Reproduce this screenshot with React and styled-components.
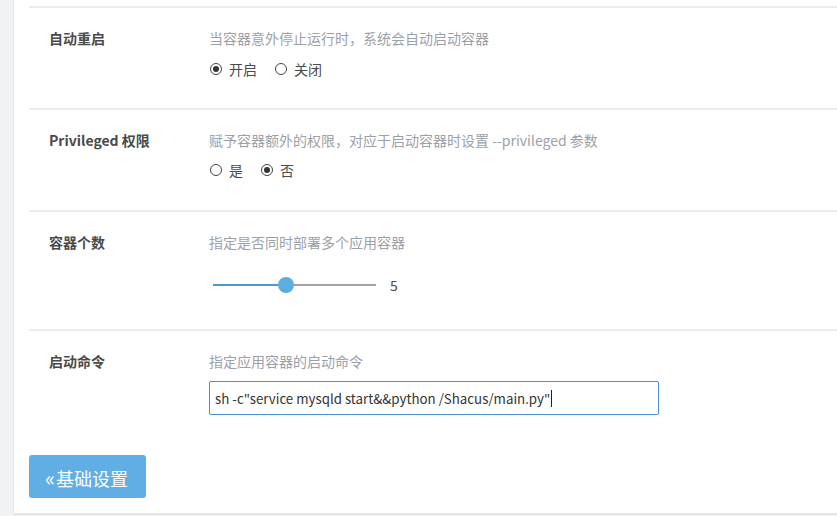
import styled, { createGlobalStyle } from 'styled-components';

const GlobalStyle = createGlobalStyle`
	html, body {
		margin: 0;
		padding: 0;
		background: #f1f2f6;
		font-family: "Noto Sans CJK SC", "Noto Sans", sans-serif;
	}
`;

const Page = styled.div`
	padding-left: 13px;
	height: 516px;
	overflow: hidden;
`;

const Panel = styled.div`
	background: #fff;
	border-left: 1px solid #e6e8ec;
	border-bottom: 2px solid #e4e6ea;
	padding: 6px 0 0 15px;
	height: 515px;
	box-sizing: border-box;
	width: 840px;
`;

const Row = styled.div`
	display: grid;
	grid-template-columns: 180px 1fr;
	border-top: 2px solid #ececee;
	padding-top: 20px;
	height: ${(p) => p.$h || 'auto'};
	box-sizing: border-box;
`;

const Label = styled.div`
	padding-left: 20px;
	font-size: 14px;
	font-weight: 700;
	color: #4a4a4a;
	line-height: 20px;
`;

const Field = styled.div`
	display: flex;
	flex-direction: column;
	gap: ${(p) => p.$gap || '10px'};
`;

const Desc = styled.div`
	font-size: 14px;
	color: #9ba1a9;
	line-height: 20px;
`;

const RadioGroup = styled.div`
	display: flex;
	align-items: center;
	height: 20px;
	gap: 17px;
`;

const RadioItem = styled.label`
	display: flex;
	align-items: center;
	gap: 7px;
	font-size: 14px;
	color: #4a4a4a;
`;

const Circle = styled.span`
	width: 12px;
	height: 12px;
	border: 1.3px solid #444;
	border-radius: 50%;
	box-sizing: border-box;
	display: flex;
	align-items: center;
	justify-content: center;
	margin-left: 1px;

	&::after {
		content: '';
		width: 6px;
		height: 6px;
		border-radius: 50%;
		background: ${(p) => (p.$checked ? '#333' : 'transparent')};
	}
`;

const SliderRow = styled.div`
	display: flex;
	align-items: center;
	height: 20px;
	margin-top: 13px;
	padding-left: 4px;
`;

const Track = styled.div`
	position: relative;
	width: 163px;
	height: 2px;
	background: #a2a2a2;
`;

const Fill = styled.div`
	height: 100%;
	background: #4f97cf;
`;

const Thumb = styled.span`
	position: absolute;
	top: 50%;
	width: 16px;
	height: 16px;
	border-radius: 50%;
	background: #5dade2;
	transform: translate(-50%, -50%);
`;

const SliderValue = styled.span`
	margin-left: 14px;
	font-size: 14px;
	color: #4a4a4a;
`;

const CommandInput = styled.div`
	width: 450px;
	height: 34px;
	border: 1px solid #4a90d0;
	border-radius: 2px;
	box-sizing: border-box;
	display: flex;
	align-items: center;
	padding-left: 5px;
	font-size: 13.3px;
	color: #333;
`;

const Caret = styled.span`
	display: inline-block;
	width: 1px;
	height: 17px;
	background: #222;
	margin-left: 1px;
`;

const Footer = styled.div`
	padding-top: 40px;
`;

const BackButton = styled.button`
	width: 117px;
	height: 43px;
	border: none;
	border-radius: 3px;
	background: #60aee3;
	color: #fff;
	font-family: inherit;
	font-size: 18px;
	padding: 0 2px 0 0;
	cursor: pointer;

	span {
		font-size: 21px;
		margin-right: 1px;
	}
`;

const sliderValue = 5;
const sliderMax = 11;

export default function App() {
	const pct = ((sliderValue - 1) / (sliderMax - 1)) * 100 + 4.7;

	return (
		<Page>
			<GlobalStyle />
			<Panel>
				<Row $h="102px">
					<Label>自动重启</Label>
					<Field $gap="11px">
						<Desc>当容器意外停止运行时，系统会自动启动容器</Desc>
						<RadioGroup>
							<RadioItem>
								<Circle $checked />
								开启
							</RadioItem>
							<RadioItem>
								<Circle />
								关闭
							</RadioItem>
						</RadioGroup>
					</Field>
				</Row>
				<Row $h="102px">
					<Label>Privileged 权限</Label>
					<Field>
						<Desc>赋予容器额外的权限，对应于启动容器时设置 --privileged 参数</Desc>
						<RadioGroup>
							<RadioItem>
								<Circle />
								是
							</RadioItem>
							<RadioItem>
								<Circle $checked />
								否
							</RadioItem>
						</RadioGroup>
					</Field>
				</Row>
				<Row $h="119px">
					<Label>容器个数</Label>
					<Field>
						<Desc>指定是否同时部署多个应用容器</Desc>
						<SliderRow>
							<Track>
								<Fill style={{ width: `${pct}%` }} />
								<Thumb style={{ left: `${pct}%` }} />
							</Track>
							<SliderValue>{sliderValue}</SliderValue>
						</SliderRow>
					</Field>
				</Row>
				<Row>
					<Label>启动命令</Label>
					<Field>
						<Desc>指定应用容器的启动命令</Desc>
						<CommandInput>
							sh -c"service mysqld start&amp;&amp;python /Shacus/main.py"
							<Caret />
						</CommandInput>
					</Field>
				</Row>
				<Footer>
					<BackButton>
						<span>«</span>基础设置
					</BackButton>
				</Footer>
			</Panel>
		</Page>
	);
}
